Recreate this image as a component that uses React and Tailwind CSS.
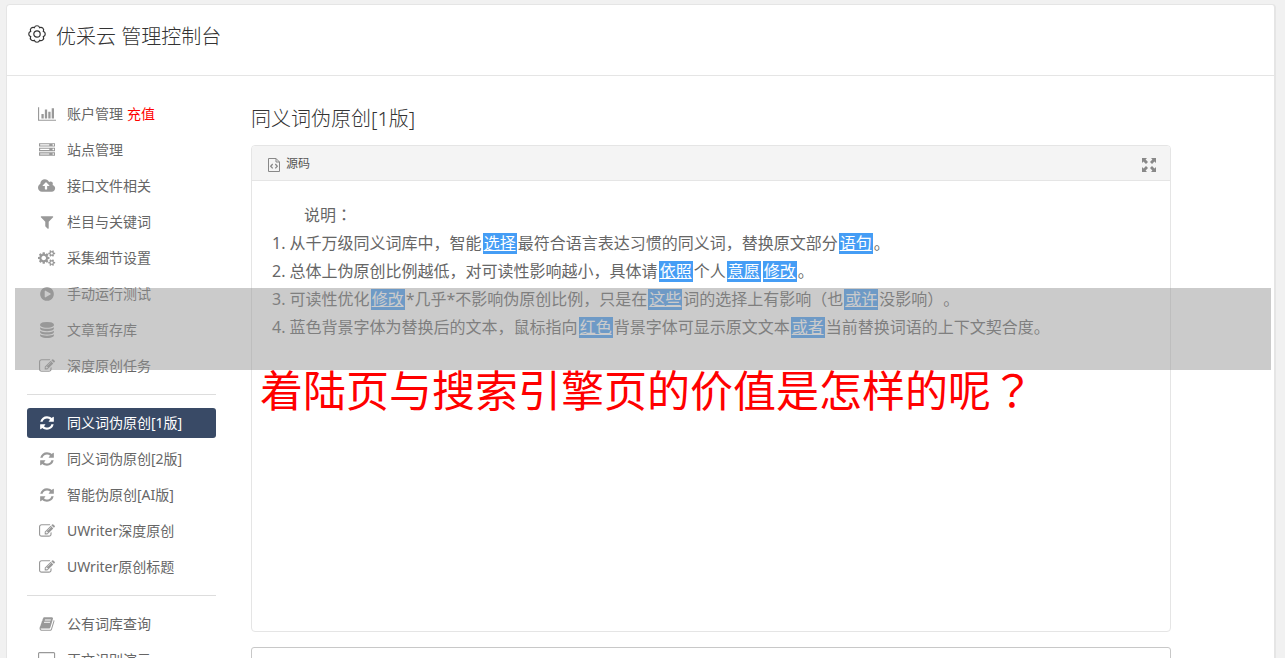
const ICONS = {
  chart: {
    box: '0 0 2048 1792',
    d: 'M640 896v512h-256v-512h256zm384-512v1024h-256v-1024h256zm1024 1152v128h-2048v-1536h128v1408h1920zm-640-896v768h-256v-768h256zm384-384v1152h-256v-1152h256z',
  },
  server: {
    box: '0 0 1792 1792',
    d: 'M128 1408h1024v-128h-1024v128zm0-512h1024v-128h-1024v128zm1568 448q0-40-28-68t-68-28-68 28-28 68 28 68 68 28 68-28 28-68zm-1568-960h1024v-128h-1024v128zm1568 448q0-40-28-68t-68-28-68 28-28 68 28 68 68 28 68-28 28-68zm0-512q0-40-28-68t-68-28-68 28-28 68 28 68 68 28 68-28 28-68zm96 832v384h-1792v-384h1792zm0-512v384h-1792v-384h1792zm0-512v384h-1792v-384h1792z',
  },
  cloud: {
    box: '-64 0 1920 1792',
    d: 'M1216 864q0-14-9-23l-352-352q-9-9-23-9t-23 9l-351 351q-10 12-10 24 0 14 9 23t23 9h224v352q0 13 9.5 22.5t22.5 9.5h192q13 0 22.5-9.5t9.5-22.5v-352h224q13 0 22.5-9.5t9.5-22.5zm640 288q0 159-112.5 271.5t-271.5 112.5h-1088q-185 0-316.5-131.5t-131.5-316.5q0-130 70-240t188-165q-2-30-2-43 0-212 150-362t362-150q156 0 285.5 87t188.5 231q71-62 166-62 106 0 181 75t75 181q0 76-41 138 130 31 213.5 135.5t83.5 238.5z',
  },
  filter: {
    box: '0 0 1792 1792',
    d: 'M1595 295q17 41-14 70l-493 493v742q0 42-39 59-13 5-25 5-27 0-45-19l-256-256q-19-19-19-45v-486l-493-493q-31-29-14-70 17-39 59-39h1280q42 0 59 39z',
  },
  cogs: {
    box: '0 0 1920 1792',
    d: 'M896 896q0-106-75-181t-181-75-181 75-75 181 75 181 181 75 181-75 75-181zm768 512q0-52-38-90t-90-38-90 38-38 90q0 53 37.5 90.5t90.5 37.5 90.5-37.5 37.5-90.5zm0-1024q0-52-38-90t-90-38-90 38-38 90q0 53 37.5 90.5t90.5 37.5 90.5-37.5 37.5-90.5zm-384 421v185q0 10-7 19.5t-16 10.5l-155 24q-11 35-32 76 34 48 90 115 7 11 7 20 0 12-7 19-23 30-82.5 89.5t-78.5 59.5q-11 0-21-7l-115-90q-37 19-77 31-11 108-23 155-7 24-30 24h-186q-11 0-20-7.5t-10-17.5l-23-153q-34-10-75-31l-118 89q-7 7-20 7-11 0-21-8-144-133-144-160 0-9 7-19 10-14 41-53t47-61q-23-44-35-82l-152-24q-10-1-17-9.5t-7-19.5v-185q0-10 7-19.5t16-10.5l155-24q11-35 32-76-34-48-90-115-7-11-7-20 0-12 7-20 22-30 82-89t79-59q11 0 21 7l115 90q34-18 77-32 11-108 23-154 7-24 30-24h186q11 0 20 7.5t10 17.5l23 153q34 10 75 31l118-89q8-7 20-7 11 0 21 8 144 133 144 160 0 8-7 19-12 16-42 54t-45 60q23 48 34 82l152 23q10 2 17 10.5t7 19.5zm640 533v140q0 16-149 31-12 27-30 52 51 113 51 138 0 4-4 7-122 71-124 71-8 0-46-47t-52-68q-20 2-30 2t-30-2q-14 21-52 68t-46 47q-2 0-124-71-4-3-4-7 0-25 51-138-18-25-30-52-149-15-149-31v-140q0-16 149-31 13-29 30-52-51-113-51-138 0-4 4-7 4-2 35-20t59-34 30-16q8 0 46 46.5t52 67.5q20-2 30-2t30 2q51-71 92-112l6-2q4 0 124 70 4 3 4 7 0 25-51 138 17 23 30 52 149 15 149 31zm0-1024v140q0 16-149 31-12 27-30 52 51 113 51 138 0 4-4 7-122 71-124 71-8 0-46-47t-52-68q-20 2-30 2t-30-2q-14 21-52 68t-46 47q-2 0-124-71-4-3-4-7 0-25 51-138-18-25-30-52-149-15-149-31v-140q0-16 149-31 13-29 30-52-51-113-51-138 0-4 4-7 4-2 35-20t59-34 30-16q8 0 46 46.5t52 67.5q20-2 30-2t30 2q51-71 92-112l6-2q4 0 124 70 4 3 4 7 0 25-51 138 17 23 30 52 149 15 149 31z',
  },
  play: {
    box: '0 0 1792 1792',
    d: 'M896 128q209 0 385.5 103t279.5 279.5 103 385.5-103 385.5-279.5 279.5-385.5 103-385.5-103-279.5-279.5-103-385.5 103-385.5 279.5-279.5 385.5-103zm384 823q32-18 32-55t-32-55l-544-320q-31-19-64-1-32 19-32 56v640q0 37 32 56 16 8 32 8 17 0 32-9z',
  },
  database: {
    box: '0 0 1792 1792',
    d: 'M896 768q237 0 443-43t325-127v170q0 69-103 128t-280 93.5-385 34.5-385-34.5-280-93.5-103-128v-170q119 84 325 127t443 43zm0 768q237 0 443-43t325-127v170q0 69-103 128t-280 93.5-385 34.5-385-34.5-280-93.5-103-128v-170q119 84 325 127t443 43zm0-384q237 0 443-43t325-127v170q0 69-103 128t-280 93.5-385 34.5-385-34.5-280-93.5-103-128v-170q119 84 325 127t443 43zm0-1152q208 0 385 34.5t280 93.5 103 128v128q0 69-103 128t-280 93.5-385 34.5-385-34.5-280-93.5-103-128v-128q0-69 103-128t280-93.5 385-34.5z',
  },
  edit: {
    box: '0 0 1792 1792',
    d: 'M888 1184l116-116-152-152-116 116v56h96v96h56zm440-720q-16-16-33 1l-350 350q-17 17-1 33t33-1l350-350q17-17 1-33zm80 594v190q0 119-84.5 203.5t-203.5 84.5h-832q-119 0-203.5-84.5t-84.5-203.5v-832q0-119 84.5-203.5t203.5-84.5h832q63 0 117 25 15 7 18 23 3 17-9 29l-49 49q-14 14-32 8-23-6-45-6h-832q-66 0-113 47t-47 113v832q0 66 47 113t113 47h832q66 0 113-47t47-113v-126q0-13 9-22l64-64q15-15 35-7t20 29zm-96-738l288 288-672 672h-288v-288zm444 132l-92 92-288-288 92-92q28-28 68-28t68 28l152 152q28 28 28 68t-28 68z',
  },
  refresh: {
    box: '0 0 1792 1792',
    d: 'M1639 1056q0 5-1 7-64 268-268 434.5t-478 166.5q-146 0-282.5-55t-243.5-157l-129 129q-19 19-45 19t-45-19-19-45v-448q0-26 19-45t45-19h448q26 0 45 19t19 45-19 45l-137 137q71 66 161 102t187 36q134 0 250-65t186-179q11-17 53-117 8-23 30-23h192q13 0 22.5 9.5t9.5 22.5zm25-800v448q0 26-19 45t-45 19h-448q-26 0-45-19t-19-45 19-45l138-138q-148-137-349-137-134 0-250 65t-186 179q-11 17-53 117-8 23-30 23h-199q-13 0-22.5-9.5t-9.5-22.5v-7q65-268 270-434.5t480-166.5q146 0 284 55.5t245 156.5l130-129q19-19 45-19t45 19 19 45z',
  },
  book: {
    box: '0 0 1792 1792',
    d: 'M1703 478q40 57 18 129l-275 906q-19 64-76.5 107.5t-122.5 43.5h-923q-77 0-148.5-53.5t-99.5-131.5q-24-67-2-127 0-4 3-27t4-37q1-8-3-21.5t-3-19.5q2-11 8-21t16.5-23.5 16.5-23.5q23-38 45-91.5t30-91.5q3-10 .5-30t-.5-28q3-11 17-28t17-23q21-36 42-92t25-90q1-9-2.5-32t.5-28q4-13 22-30.5t22-22.5q19-26 42.5-84.5t27.5-96.5q1-8-3-25.5t-2-26.5q2-8 9-18t18-23 17-21q8-12 16.5-30.5t15-35 16-36 19.5-32 26.5-23.5 36-11.5 47.5 5.5l-1 3q38-9 51-9h761q74 0 114 56t18 130l-274 906q-36 119-71.5 153.5t-128.5 34.5h-869q-27 0-38 15-11 16-1 43 24 70 144 70h923q29 0 56-15.5t35-41.5l300-987q7-22 5-57 38 15 59 43zm-1064 2q-4 13 2 22.5t20 9.5h608q13 0 25.5-9.5t16.5-22.5l21-64q4-13-2-22.5t-20-9.5h-608q-13 0-25.5 9.5t-16.5 22.5zm-83 256q-4 13 2 22.5t20 9.5h608q13 0 25.5-9.5t16.5-22.5l21-64q4-13-2-22.5t-20-9.5h-608q-13 0-25.5 9.5t-16.5 22.5z',
  },
  desktop: {
    box: '0 0 1920 1792',
    d: 'M1792 992v-832q0-13-9.5-22.5t-22.5-9.5h-1600q-13 0-22.5 9.5t-9.5 22.5v832q0 13 9.5 22.5t22.5 9.5h1600q13 0 22.5-9.5t9.5-22.5zm128-832v1088q0 66-47 113t-113 47h-544q0 37 16 77.5t32 71 16 43.5q0 26-19 45t-45 19h-512q-26 0-45-19t-19-45q0-14 16-44t32-70 16-78h-544q-66 0-113-47t-47-113v-1088q0-66 47-113t113-47h1600q66 0 113 47t47 113z',
  },
}

const MENU = [
  [
    { icon: 'chart', label: '账户管理', extra: '充值' },
    { icon: 'server', label: '站点管理' },
    { icon: 'cloud', label: '接口文件相关' },
    { icon: 'filter', label: '栏目与关键词' },
    { icon: 'cogs', label: '采集细节设置' },
    { icon: 'play', label: '手动运行测试' },
    { icon: 'database', label: '文章暂存库' },
    { icon: 'edit', label: '深度原创任务' },
  ],
  [
    { icon: 'refresh', label: '同义词伪原创[1版]', active: true },
    { icon: 'refresh', label: '同义词伪原创[2版]' },
    { icon: 'refresh', label: '智能伪原创[AI版]' },
    { icon: 'edit', label: 'UWriter深度原创' },
    { icon: 'edit', label: 'UWriter原创标题' },
  ],
  [
    { icon: 'book', label: '公有词库查询' },
    { icon: 'desktop', label: '正文识别演示' },
  ],
]

function Icon({ name }) {
  const { box, d } = ICONS[name]
  return (
    <svg viewBox={box} className="h-4 w-auto" fill="currentColor" aria-hidden="true">
      <path d={d} />
    </svg>
  )
}

function MenuItem({ icon, label, extra, active }) {
  return (
    <li>
      <a
        href="#"
        className={`flex h-[30px] items-center rounded-[3px] text-sm ${
          active ? 'bg-[#394a66] text-white' : 'text-[#666]'
        }`}
      >
        <span className={`flex w-10 justify-center ${active ? 'text-white' : 'text-[#999]'}`}>
          <Icon name={icon} />
        </span>
        {label}
        {extra && <span className="ml-1 text-[#f00]">{extra}</span>}
      </a>
    </li>
  )
}

// A replaced synonym in the editor text
function Word({ children }) {
  return (
    <span className="mx-px inline-block bg-[#459df5] px-px leading-[21px] text-white underline">
      {children}
    </span>
  )
}

// Full-width punctuation centred in its cell
function Punct({ children }) {
  return <span lang="zh-TW" className="font-['Noto_Sans_CJK_TC',sans-serif] leading-none">{children}</span>
}

export default function App() {
  return (
    <div className="relative h-screen overflow-hidden bg-[#f1f1f1] pt-1 pr-[9px] pl-1.5 font-['Noto_Sans','Noto_Sans_CJK_SC',sans-serif] text-[#666]">
      <div className="min-h-screen rounded-t border border-r-2 border-[#e5e5e5] bg-white">
        <header className="flex h-[71px] items-start gap-2.5 border-b border-[#e5e5e5] pt-[17px] pl-[21px] text-[#333]">
          <svg viewBox="0 0 18 18" className="mt-[3px] size-[18px]" fill="none" stroke="currentColor" strokeWidth="1.2" aria-hidden="true">
            <path d="M6.36 2.63A2.8 2.8 0 0 1 11.64 2.63A2.8 2.8 0 0 1 15.37 6.36A2.8 2.8 0 0 1 15.37 11.64A2.8 2.8 0 0 1 11.64 15.37A2.8 2.8 0 0 1 6.36 15.37A2.8 2.8 0 0 1 2.63 11.64A2.8 2.8 0 0 1 2.63 6.36A2.8 2.8 0 0 1 6.36 2.63Z" />
            <circle cx="9" cy="9" r="3.2" />
          </svg>
          <h1 className="text-xl font-light leading-[30px]">优采云 管理控制台</h1>
        </header>

        <div className="flex gap-[35px] pt-[23px] pr-[103px] pl-5">
          <nav className="w-[189px] shrink-0">
            {MENU.map((group, i) => (
              <ul
                key={i}
                className={`flex flex-col gap-1.5 ${i > 0 ? 'mt-[13px] border-t border-[#ddd] pt-[13px]' : ''}`}
              >
                {group.map((item) => (
                  <MenuItem key={item.label} {...item} />
                ))}
              </ul>
            ))}
          </nav>

          <main className="min-w-0 flex-1 pt-[5px]">
            <h2 id="page-title" className="mb-[11px] text-xl font-light leading-[30px] text-[#333]">同义词伪原创[1版]</h2>

            <section className="overflow-hidden rounded border border-[#e5e5e5]">
              <div className="flex h-[35px] items-center justify-between border-b border-[#e5e5e5] bg-[#f4f4f4] pr-3.5 pl-4">
                <button type="button" className="flex items-center gap-1.5 pt-0.5 text-xs text-[#555]">
                  <svg viewBox="0 0 12 14" className="mt-0.5 h-3.5 w-3" fill="none" stroke="#888" aria-hidden="true">
                    <path d="M.5.5h7.500l3.500 3.500v9.500h-11z" />
                    <path d="M8 .5v3.500h3.500" />
                    <path d="M4.700 6l-2 2.200 2 2.200M7.300 6l2 2.200-2 2.200" strokeWidth="1.300" />
                  </svg>
                  源码
                </button>
                <button type="button" aria-labelledby="page-title" className="mt-1 text-[#888]">
                  <svg viewBox="0 0 14 14" className="size-3.5" fill="currentColor" aria-hidden="true">
                    <path d="M0 0h5L3.600 1.500 6 4 4 6 1.500 3.600 0 5z" />
                    <path d="M14 0v5l-1.500-1.400L10 6 8 4l2.400-2.500L9 0z" />
                    <path d="M0 14v-5l1.500 1.400L4 8l2 2-2.400 2.500L5 14z" />
                    <path d="M14 14h-5l1.400-1.500L8 10l2-2 2.500 2.400L14 9z" />
                  </svg>
                </button>
              </div>
              <div className="min-h-[450px] p-5 text-base leading-7 [text-spacing-trim:space-all]">
                <p className="indent-8">说明<Punct>：</Punct></p>
                <ol className="list-inside list-decimal">
                  <li>从千万级同义词库中，智能<Word>选择</Word>最符合语言表达习惯的同义词，替换原文部分<Word>语句</Word>。</li>
                  <li>总体上伪原创比例越低，对可读性影响越小，具体请<Word>依照</Word>个人<Word>意愿</Word><Word>修改</Word>。</li>
                  <li>可读性优化<Word>修改</Word>*几乎*不影响伪原创比例，只是在<Word>这些</Word>词的选择上有影响（也<Word>或许</Word>没影响）。</li>
                  <li>蓝色背景字体为替换后的文本，鼠标指向<Word>红色</Word>背景字体可显示原文文本<Word>或者</Word>当前替换词语的上下文契合度。</li>
                </ol>
              </div>
            </section>

            <textarea
              aria-labelledby="page-title"
              className="mt-[15px] block h-24 w-full resize-none rounded-[3px] border border-[#c8c8c8] bg-white"
            />
          </main>
        </div>
      </div>

      {/* Banner over the page, with its caption hanging below */}
      <div className="absolute top-72 right-3.5 left-[15px] h-[82px] bg-[#979797]/50" />
      <p className="absolute top-[359px] left-[260px] text-[43px] leading-[64px] whitespace-nowrap text-[#f00]">
        着陆页与搜索引擎页的价值是怎样的呢<Punct>？</Punct>
      </p>
    </div>
  )
}
